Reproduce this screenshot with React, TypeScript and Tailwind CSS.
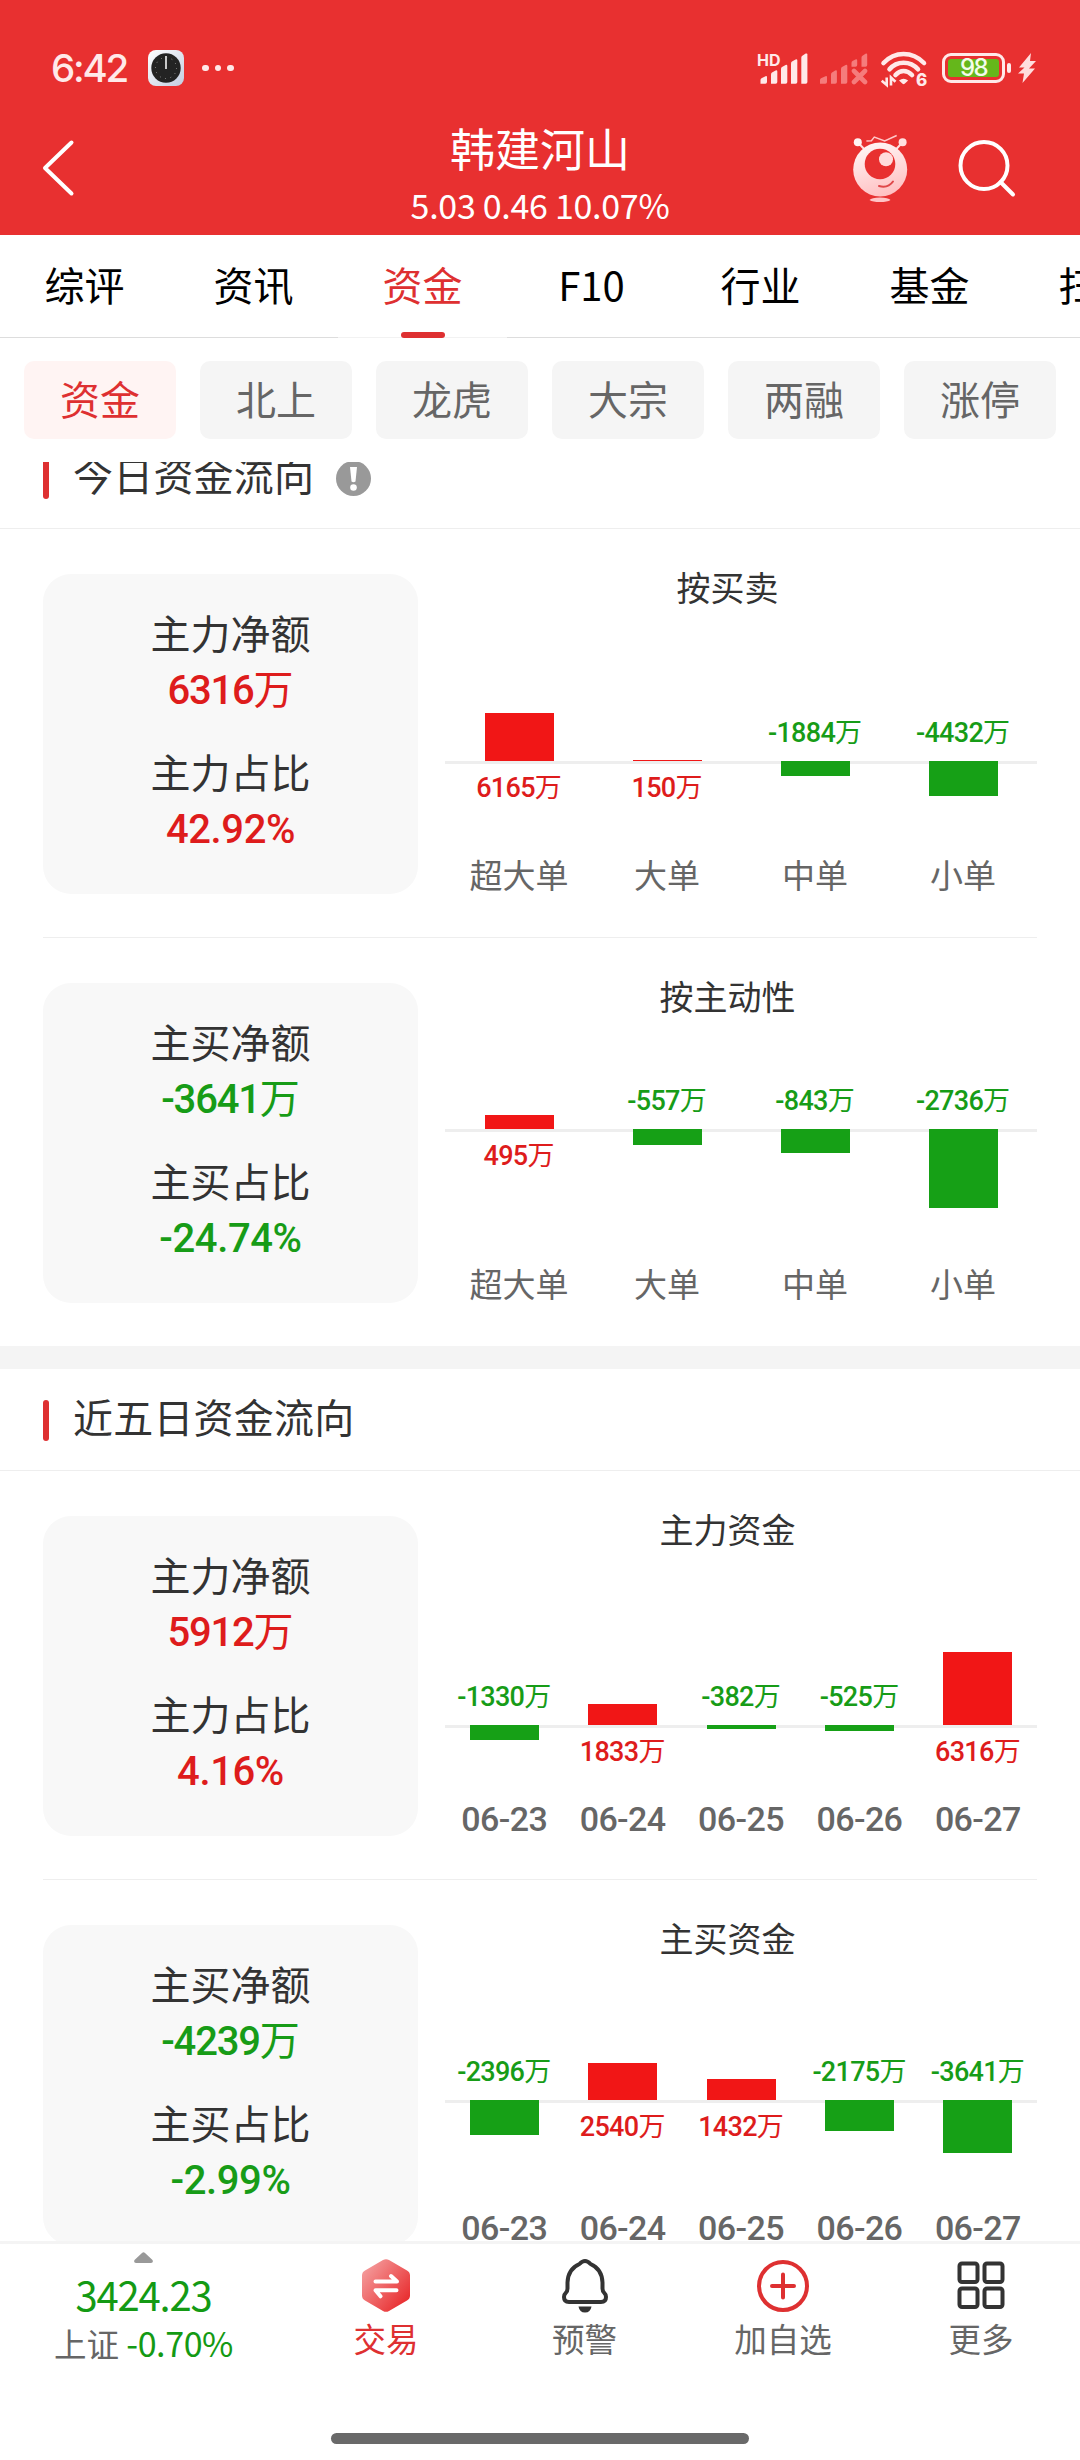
import React from 'react';
import { clsx } from 'clsx';

type Bar = {
  label: string;
  value: number;
};

interface FlowRowProps {
  name: string;
  amount: number;
  ratio: number;
  chartTitle: string;
  // distance from the top of the plot to the zero line
  axis: number;
  // pixels per 万
  scale: number;
  bars: Bar[];
  dates?: boolean;
}

const TABS = ['综评', '资讯', '资金', 'F10', '行业', '基金', '扫雷'];
const PILLS = ['资金', '北上', '龙虎', '大宗', '两融', '涨停'];

const TODAY: FlowRowProps[] = [
  {
    name: '主力',
    amount: 6316,
    ratio: 42.92,
    chartTitle: '按买卖',
    axis: 158,
    scale: 0.00779,
    bars: [
      { label: '超大单', value: 6165 },
      { label: '大单', value: 150 },
      { label: '中单', value: -1884 },
      { label: '小单', value: -4432 },
    ],
  },
  {
    name: '主买',
    amount: -3641,
    ratio: -24.74,
    chartTitle: '按主动性',
    axis: 117,
    scale: 0.0289,
    bars: [
      { label: '超大单', value: 495 },
      { label: '大单', value: -557 },
      { label: '中单', value: -843 },
      { label: '小单', value: -2736 },
    ],
  },
];

const FIVE_DAYS: FlowRowProps[] = [
  {
    name: '主力',
    amount: 5912,
    ratio: 4.16,
    chartTitle: '主力资金',
    axis: 180,
    scale: 0.01156,
    dates: true,
    bars: [
      { label: '06-23', value: -1330 },
      { label: '06-24', value: 1833 },
      { label: '06-25', value: -382 },
      { label: '06-26', value: -525 },
      { label: '06-27', value: 6316 },
    ],
  },
  {
    name: '主买',
    amount: -4239,
    ratio: -2.99,
    chartTitle: '主买资金',
    axis: 146,
    scale: 0.01446,
    dates: true,
    bars: [
      { label: '06-23', value: -2396 },
      { label: '06-24', value: 2540 },
      { label: '06-25', value: 1432 },
      { label: '06-26', value: -2175 },
      { label: '06-27', value: -3641 },
    ],
  },
];

const SignalIcon: React.FC = () => (
  <svg width="52" height="36" viewBox="0 0 52 36" fill="#ffe9e9">
    <text x="1" y="16" fontSize="16" fontWeight="700" fontFamily="Inter, sans-serif">HD</text>
    <path d="M4.500 33.700V30q0-1.200 1-1.800l4-2q1.500-.6 1.500 1v4.800q0 1.700-1.700 1.700H6z" />
    <path d="M15 33.700V24.500q0-1.200 1-1.900l3.600-2.200q1.700-.7 1.700 1v10.600q0 1.700-1.700 1.700z" />
    <path d="M25 33.700V19q0-1.200 1-1.900l3.600-2.200q1.700-.7 1.700 1v16.100q0 1.700-1.700 1.700z" />
    <path d="M35 33.700V13.500q0-1.200 1-1.900l3.600-2.200q1.700-.7 1.700 1v21.600q0 1.700-1.700 1.700z" />
    <path d="M45.300 33.700V7.700q0-1.200 1-1.900l3.400-2.200q1.700-.7 1.700 1v27.400q0 1.700-1.700 1.700z" />
  </svg>
);

const NoSignalIcon: React.FC = () => (
  <svg width="48" height="36" viewBox="0 0 48 36" fill="#f57c7c">
    <path d="M0 33.700V30q0-1.200 1-1.800l4.500-2q1.500-.6 1.500 1v4.800q0 1.700-1.700 1.700z" />
    <path d="M11 33.700V24.500q0-1.200 1-1.900l3.200-2.200q1.700-.7 1.700 1v10.600q0 1.700-1.700 1.700z" />
    <path d="M21 33.700V19q0-1.200 1-1.900l3.600-2.200q1.700-.7 1.700 1v16.100q0 1.700-1.700 1.700z" />
    <path d="M31.500 16.800v-3.800q0-1.200 1-1.900l3-1.700q1.700-.7 1.700 1v4.700q0 1.700-1.700 1.700z" />
    <path d="M41.500 16.800V7.700q0-1.200 1-1.900l3-2q1.700-.7 1.700 1v10.300q0 1.700-1.700 1.700z" />
    <path d="M34 21l11 11M45 21L34 32" stroke="#f57c7c" strokeWidth="4.600" strokeLinecap="round" />
  </svg>
);

const WifiIcon: React.FC = () => (
  <svg width="48" height="42" viewBox="0 -2 48 42" fill="none" stroke="#ffe9e9" strokeWidth="4.600" strokeLinecap="round">
    <path d="M3.500 14Q12 5 23.600 5T44 14" />
    <path d="M9.500 20.200Q15 13.700 23.600 13.700T38 20.200" />
    <path d="M15.500 26Q19 22 23.600 22T32 26" />
    <path d="M19 31.500q4.600-3.500 9.200 0l-3.600 3.300q-1 .8-2 0z" fill="#ffe9e9" stroke="none" />
    <path d="M6.700 28.500v7.500l-5-4.300M11 36.500v-8l4.500 4.300" strokeWidth="2.600" strokeLinecap="butt" />
    <text x="36" y="36.500" fontSize="17" fontWeight="800" fontFamily="Inter, sans-serif" fill="#ffe9e9" stroke="none">6</text>
  </svg>
);

const BatteryIcon: React.FC = () => (
  <div className="flex items-center gap-0.5">
    <div className="flex h-[30px] w-[63px] rounded-[9px] border-[3px] border-[#ffe9e9] p-[3px]">
      <div className="flex flex-1 items-center justify-center rounded-[3px] bg-[#65b71b] font-[Inter,sans-serif] text-[24px] leading-none font-medium tracking-[-1.500px] text-[#f4fbea]">
        98
      </div>
    </div>
    <div className="h-2.5 w-1 rounded-sm bg-[#ffe9e9]" />
  </div>
);

const RobotIcon: React.FC = () => (
  <svg width="56" height="70" viewBox="0 0 56 70" fill="none">
    <defs>
      <linearGradient id="robot" x1="0.300" y1="0" x2="0.600" y2="1">
        <stop offset="0" stopColor="#fff6f6" />
        <stop offset="1" stopColor="#ffbfc1" />
      </linearGradient>
    </defs>
    <path d="M14.400 8l5-.3 2.900-3.700 10.400 4L44.700 2.500" stroke="#ffc9c9" strokeWidth="1.400" />
    <path d="M5.800 9.300l6.500 7M50.600 9.300l-6.500 7" stroke="#ffe0e0" strokeWidth="2" />
    <circle cx="5.800" cy="9.300" r="4" fill="#fff3f3" />
    <circle cx="50.600" cy="9.300" r="4" fill="#ffe0e0" />
    <circle cx="28.200" cy="36.500" r="27" fill="url(#robot)" />
    <circle cx="28" cy="31" r="15.300" fill="#e83030" />
    <circle cx="34" cy="26.300" r="7" fill="#ffdcdc" />
    <path d="M27 53q9 2.500 14-4.500" stroke="#e0484a" strokeWidth="2" strokeLinecap="round" />
    <path d="M17.500 67q2-2.500 10.500-2.500T38.500 67q-3 2-10.500 2t-10.500-2z" fill="#ffc4c6" />
  </svg>
);

const StatusBar: React.FC = () => (
  <div className="flex h-[88px] items-center justify-between pt-12 pr-11 pl-[51px]">
    <div className="flex items-center">
      <span className="w-[97px] font-[Inter,sans-serif] text-[38.500px] leading-10 font-medium tracking-[-2.200px] text-[#ffe9e9]">6:42</span>
      <svg width="36" height="36" viewBox="0 0 36 36">
        <defs>
          <linearGradient id="clock" x1="0" y1="0" x2="1" y2="1">
            <stop offset="0" stopColor="#ffffff" />
            <stop offset="1" stopColor="#c3cde0" />
          </linearGradient>
        </defs>
        <rect width="36" height="36" rx="8" fill="url(#clock)" />
        <circle cx="18" cy="18" r="14.700" fill="#232323" />
        <circle cx="18" cy="18" r="10.500" fill="none" stroke="#aaa" strokeWidth="1" strokeDasharray="0.800 4.700" />
        <path d="M18 6v13" stroke="#c8c8c8" strokeWidth="2" />
      </svg>
      <div className="ml-[18px] flex gap-1.5">
        <i className="size-[6.500px] rounded-full bg-[#ffe9e9]" />
        <i className="size-[6.500px] rounded-full bg-[#ffe9e9]" />
        <i className="size-[6.500px] rounded-full bg-[#ffe9e9]" />
      </div>
    </div>
    <div className="flex items-center">
      <div className="flex items-center gap-3">
        <SignalIcon />
        <NoSignalIcon />
        <WifiIcon />
      </div>
      <div className="ml-3.5 flex items-center gap-[7px]">
        <BatteryIcon />
        <svg width="18" height="30" viewBox="0 0 18 30" fill="#ffdede">
          <path d="M13 0L1 14.500h5.500L0 20.500h6L4.500 30 17 15.500h-6L18 8h-6z" />
        </svg>
      </div>
    </div>
  </div>
);

const Header: React.FC = () => (
  <header className="h-[235px] bg-[#e83030] text-white">
    <StatusBar />
    <div className="grid h-[147px] grid-cols-[1fr_auto_1fr] items-center pt-3">
      <svg className="ml-10" width="36" height="60" viewBox="0 0 36 60" fill="none" stroke="#fff" strokeWidth="4" strokeLinecap="round" strokeLinejoin="round">
        <path d="M31.500 4.500L5 30l26.500 25.500" />
      </svg>
      <div className="self-end text-center">
        <h1 className="text-[45px] leading-[56px]">韩建河山</h1>
        <p className="h-[59px] text-[34px] leading-[57px] tracking-[-0.300px]">5.03 0.46 10.07%</p>
      </div>
      <div className="flex items-center justify-end gap-[49px] pr-[63px]">
        <RobotIcon />
        <svg width="60" height="60" viewBox="0 0 60 60" fill="none" stroke="#fff" strokeWidth="4" strokeLinecap="round">
          <circle cx="27" cy="27.500" r="23.500" />
          <path d="M43.500 44L56 56.500" />
        </svg>
      </div>
    </div>
  </header>
);

const Tabs: React.FC = () => (
  <nav className="flex h-[103px] overflow-hidden">
    {TABS.map((tab) => {
      const active = tab === '资金';
      return (
        <div
          key={tab}
          className={clsx(
            'flex w-[169px] shrink-0 flex-col items-center border-b text-[40px]',
            active ? 'border-[#f2f2f2] text-[#de3031]' : 'border-[#dddddd] text-black'
          )}
        >
          <span className="h-[97px] leading-[98px]">{tab}</span>
          {active && <div className="h-1.5 w-11 shrink-0 rounded-[3px] bg-[#de3031]" />}
        </div>
      );
    })}
  </nav>
);

const Pills: React.FC = () => (
  <div className="flex h-[124px] gap-6 px-6 pt-[23px]">
    {PILLS.map((pill, idx) => (
      <div
        key={pill}
        className={clsx(
          'h-[78px] flex-1 rounded-[10px] text-center text-[40px] leading-[74px]',
          idx === 0 ? 'bg-[#fff4f3] text-[#de3031]' : 'bg-[#f5f5f5] text-[#666666]'
        )}
      >
        {pill}
      </div>
    ))}
  </div>
);

const SectionTitle: React.FC<{ title: string; info?: boolean }> = ({ title, info }) => (
  <div className="flex h-[102px] items-center border-b border-[#eeeeee] pl-[43px]">
    <div className="mt-0.5 h-[41px] w-1.5 rounded-full bg-[#de3031]" />
    <h2 className="ml-6 h-[101px] text-[40px] leading-[94px] tracking-[0.200px] text-[#333333]">{title}</h2>
    {info && (
      <svg className="mt-px ml-[22px]" width="35" height="35" viewBox="0 0 35 35">
        <circle cx="17.500" cy="17.500" r="17.500" fill="#999" />
        <path d="M14 6h7l-1.500 14.500q-2 1.500-4 0z" fill="#fff" />
        <circle cx="17.500" cy="26.500" r="3.300" fill="#fff" />
      </svg>
    )}
  </div>
);

const signColor = (value: number) => (value < 0 ? 'text-[#179c17]' : 'text-[#de1c1c]');

const SummaryCard: React.FC<{ name: string; amount: number; ratio: number }> = ({ name, amount, ratio }) => (
  <div className="flex h-[320px] w-[375px] flex-col items-center rounded-[28px] bg-[#f8f8f8] pt-[30px] text-[40px] leading-[56px] text-[#333333]">
    <span>{name}净额</span>
    <span className={clsx("mt-[3px] font-[Roboto,'Noto_Sans_CJK_SC',sans-serif]", signColor(amount))}>
      <b className="font-medium tracking-[-1.200px]">{amount}</b>万
    </span>
    <span className="mt-[24px]">{name}占比</span>
    <b className={clsx('mt-[3px] font-[Roboto,sans-serif] font-medium tracking-[-0.400px]', signColor(ratio))}>{ratio.toFixed(2)}%</b>
  </div>
);

const BarLabel: React.FC<{ value: number }> = ({ value }) => (
  <span
    className={clsx(
      "h-7 text-[27px] leading-[29px] whitespace-nowrap font-[Roboto,'Noto_Sans_CJK_SC',sans-serif]",
      signColor(value)
    )}
  >
    <b className="font-medium tracking-[-0.700px]">{value}</b>万
  </span>
);

const BarChart: React.FC<Omit<FlowRowProps, 'name' | 'amount' | 'ratio'>> = ({
  chartTitle,
  axis,
  scale,
  bars,
  dates,
}) => (
  <div className="flex h-[320px] flex-1 flex-col">
    <h3 className="h-[29px] pr-[27px] text-center text-[34px] leading-[26px] text-[#333333]">{chartTitle}</h3>
    <div className="relative flex h-[255px]">
      <div className="absolute inset-x-0 h-[3px] bg-[#eeeeee]" style={{ top: axis }} />
      {bars.map(({ label, value }) => {
        const size = Math.abs(value) * scale;
        return (
          <div key={label} className="relative flex flex-1 flex-col items-center">
            <div className="flex shrink-0 flex-col items-center justify-end" style={{ height: axis }}>
              {value < 0 ? (
                <div className="mb-3.5 flex"><BarLabel value={value} /></div>
              ) : (
                <div className="w-[69px] bg-[#f11616]" style={{ height: size }} />
              )}
            </div>
            {value < 0 ? (
              <div className="w-[69px] shrink-0 bg-[#16a016]" style={{ height: size }} />
            ) : (
              <div className="mt-[13px] flex"><BarLabel value={value} /></div>
            )}
          </div>
        );
      })}
    </div>
    <div className="flex h-9 text-center text-[#666666]">
      {bars.map(({ label }) => (
        <span
          key={label}
          className={clsx(
            'flex-1',
            dates
              ? 'font-[Roboto,sans-serif] text-[34px] leading-[38px] font-medium tracking-[-0.600px]'
              : 'text-[33px] leading-[33px]'
          )}
        >
          {label}
        </span>
      ))}
    </div>
  </div>
);

const FlowRow: React.FC<FlowRowProps> = ({ name, amount, ratio, ...chart }) => (
  <div className="flex h-[408px] gap-[27px] px-[43px] pt-[45px]">
    <SummaryCard name={name} amount={amount} ratio={ratio} />
    <BarChart {...chart} />
  </div>
);

const Divider: React.FC = () => <div className="mx-[43px] h-px bg-[#eeeeee]" />;

const BottomNav: React.FC = () => (
  <footer className="h-[219px] border-t-[3px] border-[#f4f4f4] bg-white text-[32.500px] text-[#666666]">
    <div className="flex h-[189px]">
      <div className="flex w-[287px] flex-col items-center pt-2">
        <svg width="19" height="11" viewBox="0 0 19 11" fill="#999">
          <path d="M8 1q1.500-1.500 3 0l7.500 7q1.200 3-1.500 3H2q-2.700 0-1.500-3z" />
        </svg>
        <span className="mt-2 text-[40px] leading-[47px] tracking-[-1.200px] text-[#149a14]">3424.23</span>
        <span className="mt-[3px] leading-[44px] whitespace-pre">
          上证 <span className="text-[34px] tracking-[-0.400px] text-[#149a14]">-0.70%</span>
        </span>
      </div>
      <div className="flex w-[198px] flex-col items-center pt-3.5 text-[#de3031]">
        <svg width="50" height="56" viewBox="0 0 50 56">
          <defs>
            <linearGradient id="trade" x1="0" y1="0.100" x2="0.900" y2="0.900">
              <stop offset="0" stopColor="#f5a3a3" />
              <stop offset="1" stopColor="#e82a2c" />
            </linearGradient>
          </defs>
          <path d="M22 2q3-1.700 6 0l18 10.500q3 1.700 3 5v20q0 3.300-3 5L28 53q-3 1.700-6 0L4 42.500q-3-1.700-3-5v-20q0-3.300 3-5z" fill="url(#trade)" />
          <path d="M14.500 23.500h21.500l-6-5.500M35.500 32.300H14.500l5 6" fill="none" stroke="#fff" strokeWidth="4" strokeLinecap="round" strokeLinejoin="round" />
        </svg>
        <span className="leading-[47px]">交易</span>
      </div>
      <div className="flex w-[199px] flex-col items-center pt-3.5">
        <svg width="46" height="56" viewBox="0 0 46 56" fill="none" stroke="#333" strokeWidth="4" strokeLinejoin="round">
          <path d="M17.500 6q5.500-6 11 0 11.500 5 12 18.500v6q0 3 1.800 4.500 1.700 1.500 1.700 4 0 5-5 5H7q-5 0-5-5 0-2.500 1.700-4 1.800-1.500 1.800-4.500v-6Q6 11 17.500 6z" />
          <path d="M16.500 48.500h13q-1 6-6.500 6t-6.500-6z" fill="#333" stroke="none" />
        </svg>
        <span className="leading-[47px]">预警</span>
      </div>
      <div className="flex w-[198px] flex-col items-center pt-3.5">
        <svg width="52" height="56" viewBox="0 0 52 56" fill="none" stroke="#de3031" strokeWidth="4" strokeLinecap="round">
          <circle cx="26" cy="28" r="24" />
          <path d="M15 28h22M26 16.500v23" />
        </svg>
        <span className="leading-[47px]">加自选</span>
      </div>
      <div className="flex w-[198px] flex-col items-center pt-3.5">
        <svg width="48" height="56" viewBox="0 0 48 56" fill="none" stroke="#333" strokeWidth="4">
          <rect x="2.500" y="5.500" width="18" height="18.500" rx="2.500" />
          <rect x="27.500" y="5.500" width="18" height="18.500" rx="2.500" />
          <rect x="2.500" y="30.500" width="18" height="18.500" rx="2.500" />
          <rect x="27.500" y="30.500" width="18" height="18.500" rx="2.500" />
        </svg>
        <span className="leading-[47px]">更多</span>
      </div>
    </div>
    <div className="mx-auto h-[11px] w-[418px] rounded-full bg-[#696969]" />
  </footer>
);

const App: React.FC = () => (
  <div className="flex h-[2460px] w-[1080px] flex-col overflow-hidden bg-white font-['Noto_Sans_CJK_SC',sans-serif]">
    <Header />
    <Tabs />
    <Pills />

    {/* Scrolled content, cut by the sticky tabs above and the nav below */}
    <main className="h-[1779px] shrink-0 overflow-hidden">
      <div className="-mt-[35px]">
        <SectionTitle title="今日资金流向" info />
        <FlowRow {...TODAY[0]} />
        <Divider />
        <FlowRow {...TODAY[1]} />
        <div className="h-[23px] bg-[#f4f4f4]" />
        <SectionTitle title="近五日资金流向" />
        <FlowRow {...FIVE_DAYS[0]} />
        <Divider />
        <FlowRow {...FIVE_DAYS[1]} />
      </div>
    </main>

    <BottomNav />
  </div>
);

export default App;
